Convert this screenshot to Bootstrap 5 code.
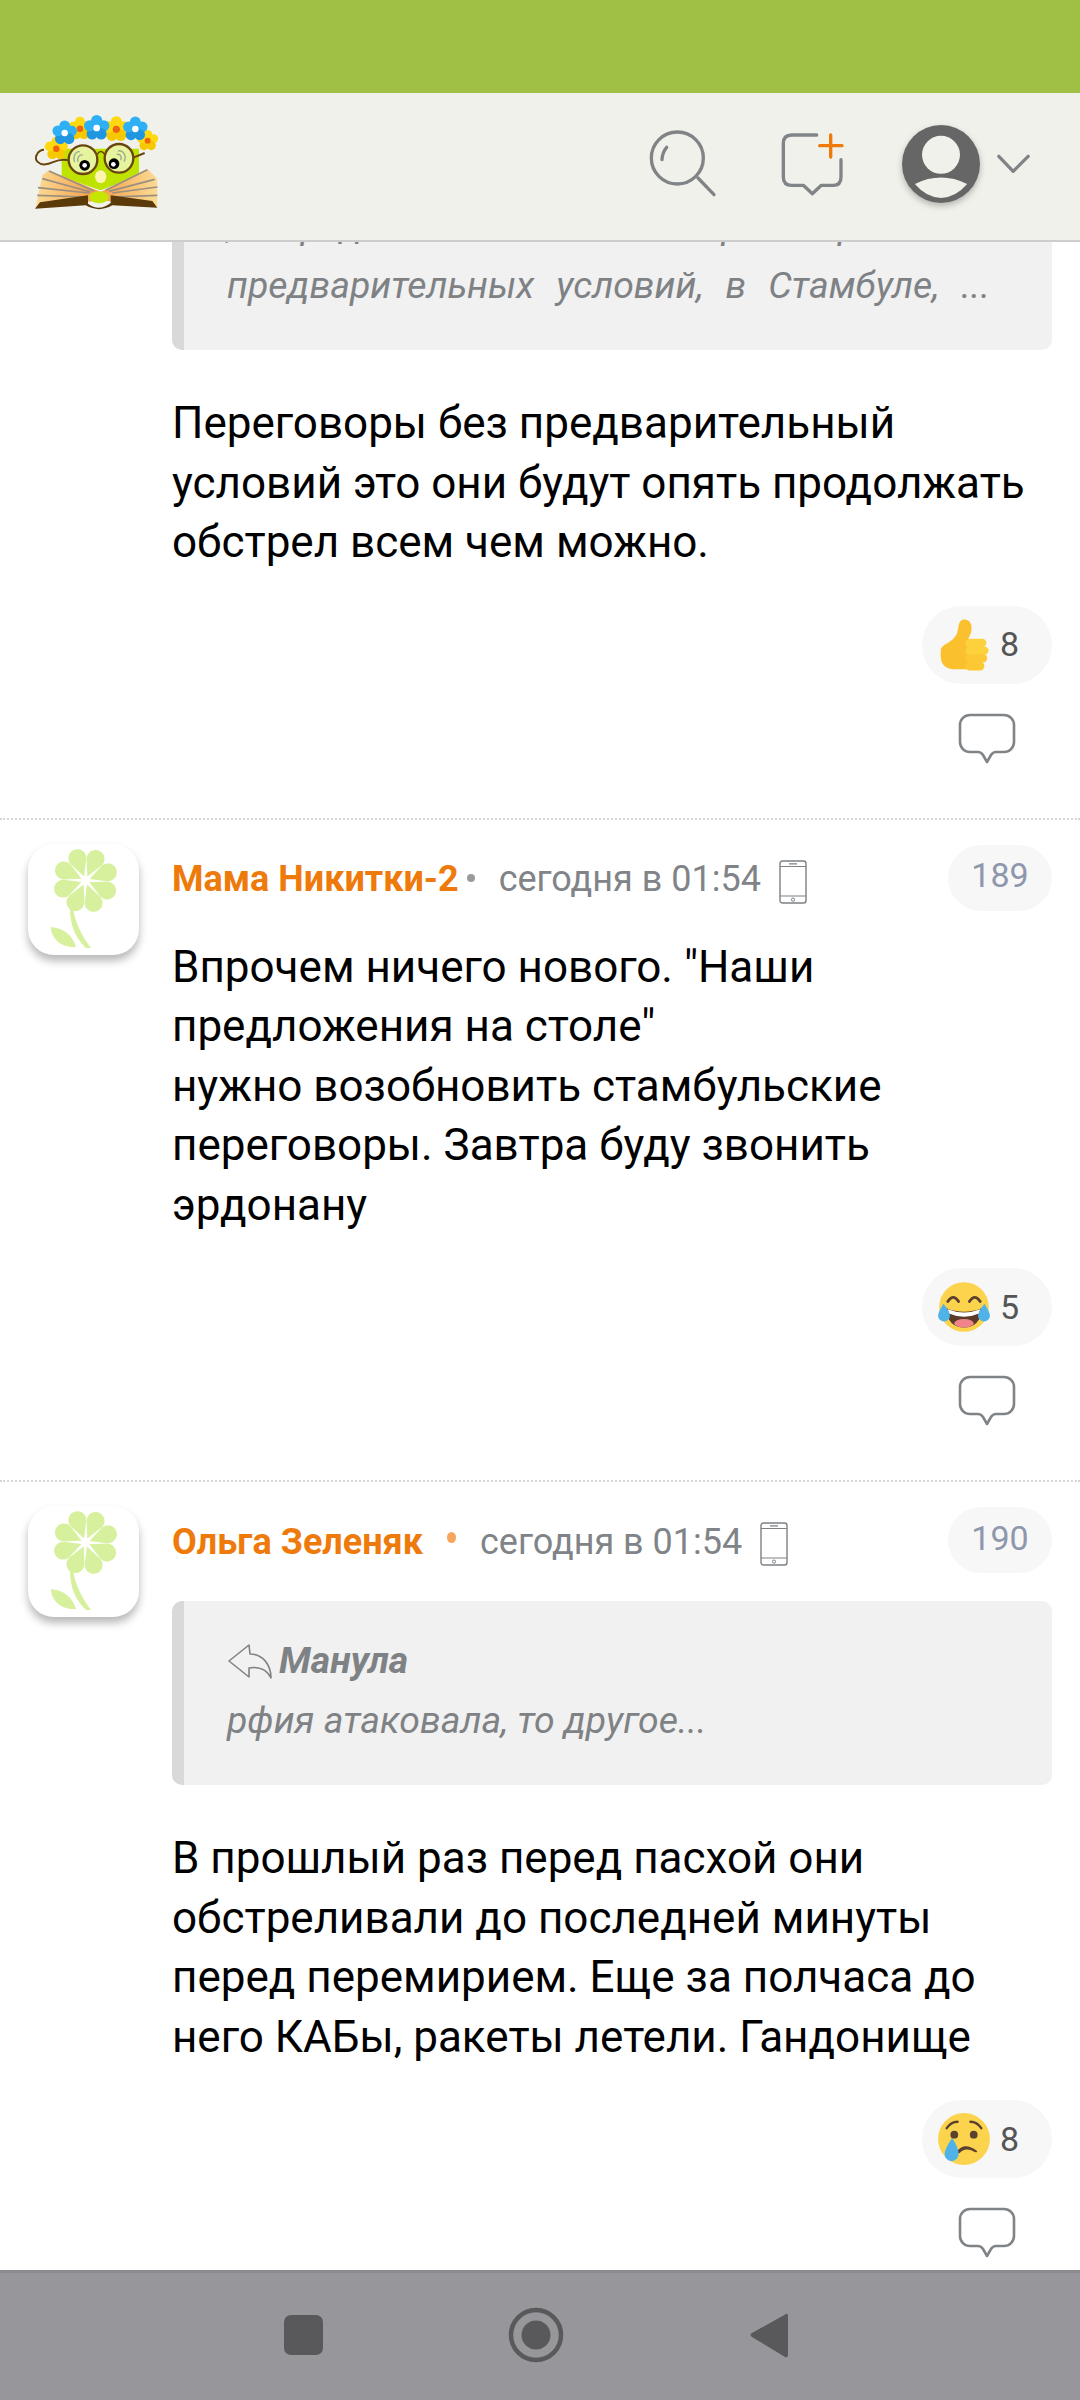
<!DOCTYPE html>
<html lang="ru">
<head>
<meta charset="utf-8">
<title>Комментарии</title>
<link rel="stylesheet" href="https://cdn.jsdelivr.net/npm/bootstrap@5.3.0/dist/css/bootstrap.min.css">
<style>
html,body{height:100%}
body{font-family:Roboto,"Liberation Sans",sans-serif;color:#000;background:#fff;height:2400px;overflow:hidden}
.status-strip{height:93px;background:#9fc045;flex:none}
.top-bar{height:149px;flex:none;background:#f0f1ea;border-bottom:2px solid #cdcdcd;padding:0 50px 6px 35px;position:relative;z-index:2}
.brand-logo{margin-bottom:6px}
.ico-search{width:70px;height:70px;margin-right:62px}
.ico-new{width:65px;height:65px;margin-right:57px}
.ico-user{width:78px;height:78px;margin-right:17px;filter:drop-shadow(0 3px 3px rgba(0,0,0,.25))}
.ico-chev{width:33px;height:20px}
.feed{min-height:0;flex:1 1 auto}
.lead-in{margin-top:-76px;padding:0 28px 0 172px}
.quote-box{background:#f1f1f1;border-left:12px solid #d9d9d9;border-radius:10px;padding:29px 62px 35px 43px;font-style:italic;font-size:37.4px;line-height:60px;color:#7f8285}
.quote-just{text-align:justify;text-align-last:justify}
.quote-who{font-weight:700}
.ico-reply{width:45px;height:36px;margin-right:7px;vertical-align:-6px}
.msg-text{font-size:44px;line-height:59.5px;margin:0;color:#000}
.comment-entry{padding:24px 28px 52px 28px;border-top:2px dotted #d6d6d6;gap:33px}
.ava{width:111px;height:111px;border-radius:26px;background:#fff;box-shadow:0 6px 8px rgba(0,0,0,.28);flex:none}
.entry-body{min-width:0;padding-top:1px}
.meta-row{height:66px;font-size:36px;color:#808488}
.who{color:#ee7a0c;font-weight:700;padding-top:3px}
.when{padding-top:3px}
.sep-dot{width:8px;height:8px;border-radius:50%;background:#9a9a9a}
.sep-dot.warm{background:#f5a55c;height:11px;width:9px;margin-bottom:6px}
.num-pill{width:104px;height:66px;background:#f7f7f8;color:#8e97ab;font-size:34px;border-radius:33px;padding-bottom:4px}
.ico-phone{width:28px;height:44px;margin:8px 0 0 18px}
.react-pill{width:130px;height:78px;border-radius:39px;background:#f7f7f8;font-size:34px;color:#555;padding-left:15px;gap:9px;margin-top:33px}
.emo{width:54px;height:54px;flex:none}
.ico-talk{width:58px;height:53px;margin-top:29px;margin-right:36px}
.lead-text{margin:44px 28px 0 172px}
.lead-acts{margin-right:28px}
.lead-acts + .gapline{margin-top:52px}
.nav-strip{height:130px;flex:none;background:#97969b;border-top:3px solid #8c8b90;position:relative;z-index:2}
.nav-strip svg{display:block}
.q-top{margin-top:28px}
.t-gap{margin-top:27px}
.t-gap-q{margin-top:44px}
</style>
</head>
<body class="d-flex flex-column">
<svg width="0" height="0" class="position-absolute">
  <defs>
    <g id="fy"><circle cx="0" cy="-19" r="14" fill="#ffd90f"/><circle cx="18" cy="-6" r="14" fill="#ffd90f"/><circle cx="11" cy="15" r="14" fill="#f5c800"/><circle cx="-11" cy="15" r="14" fill="#f5c800"/><circle cx="-18" cy="-6" r="14" fill="#ffd90f"/><circle r="9" fill="#f0640f"/></g>
    <g id="fb"><circle cx="0" cy="-20" r="15" fill="#2fb0f5"/><circle cx="19" cy="-6" r="15" fill="#2fb0f5"/><circle cx="12" cy="16" r="15" fill="#2196e0"/><circle cx="-12" cy="16" r="15" fill="#2196e0"/><circle cx="-19" cy="-6" r="15" fill="#2fb0f5"/><circle r="9" fill="#fff"/></g>
    <symbol id="flower" viewBox="0 0 111 111">
      <g fill="#d7f09d">
        <path d="M45 64 C47 78 54 92 63 104 H58 C47 94 42 80 42 65Z"/>
        <path d="M23 83 C36 84 45 92 48 103 C35 104 23 96 23 83Z"/>
        <g transform="translate(57.5 36.5) scale(1.08)">
          <path id="pt" d="M0 -4 L-7.5 -18.5 A8.3 8.3 0 1 1 7.5 -18.5Z" transform="rotate(-20)"/>
          <use href="#pt" transform="rotate(45)"/><use href="#pt" transform="rotate(90)"/><use href="#pt" transform="rotate(135)"/><use href="#pt" transform="rotate(180)"/><use href="#pt" transform="rotate(225)"/><use href="#pt" transform="rotate(270)"/><use href="#pt" transform="rotate(315)"/>
        </g>
      </g>
    </symbol>
    <symbol id="talk" viewBox="0 0 58 53">
      <path d="M12 2 H46 A10 10 0 0 1 56 12 V29 A10 10 0 0 1 46 39 H38 Q35 39 33 42 L29 49 L25 42 Q23 39 20 39 H12 A10 10 0 0 1 2 29 V12 A10 10 0 0 1 12 2Z" fill="none" stroke="#808487" stroke-width="2.6" stroke-linejoin="round"/>
    </symbol>
    <symbol id="phone" viewBox="0 0 28 44">
      <rect x="1" y="1" width="26" height="42" rx="2.5" fill="none" stroke="#7d8185" stroke-width="1.4"/>
      <path d="M1 6.5 H27 M1 36 H27 M10 3.8 H18" stroke="#7d8185" stroke-width="1.2" fill="none"/>
      <circle cx="14" cy="39.6" r="1.6" fill="none" stroke="#7d8185" stroke-width="1"/>
    </symbol>
  </defs>
</svg>

<div class="status-strip"></div>

<header class="top-bar d-flex align-items-center">
  <svg class="brand-logo" width="124" height="98" viewBox="103 95 372 294" aria-label="logo">
    <defs>
      <linearGradient id="pg" x1="0" y1="0" x2="1" y2="0"><stop offset="0" stop-color="#fbdc95"/><stop offset=".5" stop-color="#f59b45"/><stop offset="1" stop-color="#fbdc95"/></linearGradient>
    </defs>
    <path d="M183 205 H415 V285 L300 330 L183 290Z" fill="#bfe300"/>
    <path d="M105 382 L125 285 L145 270 L300 335 L440 266 L470 295 L470 378 L300 360Z" fill="url(#pg)"/>
    <path d="M112 322 L265 338 M110 345 L262 350 M125 295 L270 335 M145 272 L280 332 M470 320 L335 338 M470 345 L335 350 M462 297 L325 333 M440 268 L315 330" stroke="#9a8f80" stroke-width="5" fill="none"/>
    <path d="M103 385 L118 366 L262 345 L262 370 Q295 395 330 368 L330 345 L455 362 L470 382 L335 375 Q295 398 255 375Z" fill="#5a3a08"/>
    <ellipse cx="295" cy="351" rx="29" ry="18" fill="#c4e600"/>
    <ellipse cx="300" cy="289" rx="17" ry="19" fill="#fff5b0"/>
    <path d="M205 240 C170 232 155 250 135 252 C115 254 100 240 108 224 C112 213 124 208 130 208 M398 232 L432 218" stroke="#6b4510" stroke-width="6" fill="none"/>
    <circle cx="247" cy="238" r="43" fill="#e6f4a0" stroke="#6b4510" stroke-width="7"/>
    <circle cx="355" cy="234" r="43" fill="#e6f4a0" stroke="#6b4510" stroke-width="7"/>
    <path d="M290 222 Q300 205 312 222" stroke="#6b4510" stroke-width="5" fill="none"/>
    <path d="M222 245 C215 225 228 210 238 215 M232 245 C228 232 236 222 246 224 M370 244 C380 225 365 208 352 212 M360 240 C365 228 358 220 348 222" stroke="#9aa890" stroke-width="4" fill="none"/>
    <circle cx="252" cy="255" r="16" fill="#000"/><circle cx="252" cy="255" r="7" fill="#fff"/>
    <circle cx="340" cy="250" r="16" fill="#000"/><circle cx="338" cy="252" r="7" fill="#fff"/>
    <use href="#fy" transform="translate(167 205) scale(1.08)"/>
    <use href="#fy" transform="translate(238 145) scale(1.08)"/>
    <use href="#fy" transform="translate(347 147) scale(1.2)"/>
    <use href="#fy" transform="translate(441 181) scale(.98)"/>
    <use href="#fb" transform="translate(192 158) scale(1.08)"/>
    <use href="#fb" transform="translate(288 143) scale(1.12)"/>
    <use href="#fb" transform="translate(404 146) scale(1.08)"/>
  </svg>
  <svg class="ico-search ms-auto" viewBox="85 88 210 210" aria-label="search">
    <circle cx="173" cy="175" r="78" fill="none" stroke="#808487" stroke-width="10"/>
    <path d="M235 235 L283 285" stroke="#808487" stroke-width="10" stroke-linecap="round"/>
    <path d="M141 143 Q128 158 127 180" stroke="#808487" stroke-width="10" stroke-linecap="round" fill="none"/>
  </svg>
  <svg class="ico-new" viewBox="485 92 195 195" aria-label="new">
    <path d="M595 104 H520 Q495 104 495 129 V230 Q495 255 520 255 H555 L582 280 L609 255 H645 Q668 255 668 230 V178" fill="none" stroke="#808487" stroke-width="10" stroke-linecap="round" stroke-linejoin="round"/>
    <path d="M637 104 V170 M604 136 H671" stroke="#ee7a0c" stroke-width="10" stroke-linecap="round"/>
  </svg>
  <svg class="ico-user" viewBox="850 72 230 230" aria-label="user">
    <circle cx="965" cy="187" r="115" fill="#666"/>
    <circle cx="965" cy="160" r="56" fill="#f0f1ea"/>
    <path d="M888 246 Q965 208 1042 246 Q1008 286 965 287 Q922 286 888 246Z" fill="#f0f1ea"/>
  </svg>
  <svg class="ico-chev" viewBox="1132 158 98 60" aria-hidden="true">
    <path d="M1137 165 L1180 210 L1225 165" fill="none" stroke="#808487" stroke-width="10" stroke-linecap="round" stroke-linejoin="round"/>
  </svg>
</header>

<main class="feed overflow-hidden">
  <div class="lead-in">
    <div class="quote-box">
      <div class="quote-just">, предложил начать переговоры без</div>
      <div class="quote-just">предварительных условий, в Стамбуле, ...</div>
    </div>
  </div>
  <p class="msg-text lead-text">Переговоры без предварительный<br>условий это они будут опять продолжать<br>обстрел всем чем можно.</p>
  <div class="d-flex flex-column align-items-end lead-acts">
    <div class="react-pill d-flex align-items-center">
      <svg class="emo" viewBox="172 86 152 154" aria-label="thumbs up">
        <path d="M182 178 C182 160 215 158 228 130 C234 112 230 90 250 90 C270 92 272 112 268 128 L258 150 L262 232 L215 232 C190 228 178 215 182 178Z" fill="#fbc02d"/>
        <rect x="252" y="145" width="60" height="24" rx="12" fill="#fdd13c"/>
        <rect x="252" y="167" width="66" height="24" rx="12" fill="#fdd13c"/>
        <rect x="252" y="189" width="62" height="24" rx="12" fill="#fcc934"/>
        <rect x="252" y="211" width="54" height="25" rx="12" fill="#fcc934"/>
      </svg>
      <span>8</span>
    </div>
    <svg class="ico-talk"><use href="#talk"/></svg>
  </div>

  <article class="comment-entry gapline d-flex">
    <svg class="ava"><use href="#flower"/></svg>
    <div class="entry-body flex-grow-1">
      <div class="meta-row d-flex align-items-center">
        <span class="who">Мама Никитки-2</span>
        <span class="sep-dot ms-2 me-4"></span>
        <span class="when">сегодня в 01:54</span>
        <svg class="ico-phone"><use href="#phone"/></svg>
        <span class="num-pill ms-auto d-flex align-items-center justify-content-center">189</span>
      </div>
      <p class="msg-text t-gap">Впрочем ничего нового. "Наши<br>предложения на столе"<br>нужно возобновить стамбульские<br>переговоры. Завтра буду звонить<br>эрдонану</p>
      <div class="d-flex flex-column align-items-end">
        <div class="react-pill d-flex align-items-center">
          <svg class="emo" viewBox="0 0 50 50" aria-label="joy">
            <circle cx="25" cy="25" r="23" fill="#fcd34d"/>
            <path d="M10 20 Q15 12 20 20 M30 20 Q35 12 40 20" fill="none" stroke="#5b4030" stroke-width="2.6" stroke-linecap="round"/>
            <path d="M8 26 Q25 33 42 26 Q40 44 25 44 Q10 44 8 26Z" fill="#5b3a28"/>
            <path d="M10 27 Q25 33 40 27 L39 31 Q25 37 11 31Z" fill="#fff"/>
            <ellipse cx="25" cy="40" rx="9" ry="4" fill="#f0848a"/>
            <path d="M6 22 Q1 30 1 33 A5.5 5.5 0 0 0 12 33 Q11 28 6 22Z M44 22 Q49 30 49 33 A5.5 5.5 0 0 1 38 33 Q39 28 44 22Z" fill="#4fb3ea"/>
          </svg>
          <span>5</span>
        </div>
        <svg class="ico-talk"><use href="#talk"/></svg>
      </div>
    </div>
  </article>

  <article class="comment-entry d-flex">
    <svg class="ava"><use href="#flower"/></svg>
    <div class="entry-body flex-grow-1">
      <div class="meta-row d-flex align-items-center">
        <span class="who">Ольга Зеленяк</span>
        <span class="sep-dot warm mx-4"></span>
        <span class="when">сегодня в 01:54</span>
        <svg class="ico-phone"><use href="#phone"/></svg>
        <span class="num-pill ms-auto d-flex align-items-center justify-content-center">190</span>
      </div>
      <div class="quote-box q-top">
        <div class="quote-who"><svg class="ico-reply" viewBox="0 0 45 36"><path d="M22 2 L2 18 L22 34 L22 25 C32 23 40 27 44 35 C44 22 36 11 23 11Z" fill="none" stroke="#7f8285" stroke-width="1.6" stroke-linejoin="round"/></svg>Манула</div>
        <div>рфия атаковала, то другое...</div>
      </div>
      <p class="msg-text t-gap-q">В прошлый раз перед пасхой они<br>обстреливали до последней минуты<br>перед перемирием. Еще за полчаса до<br>него КАБы, ракеты летели. Гандонище</p>
      <div class="d-flex flex-column align-items-end">
        <div class="react-pill d-flex align-items-center">
          <svg class="emo" viewBox="0 0 50 50" aria-label="cry">
            <circle cx="25" cy="25" r="24" fill="#fcd34d"/>
            <path d="M9 15 Q13 9 19 9 M31 9 Q37 9 41 15" fill="none" stroke="#5b4030" stroke-width="2.2" stroke-linecap="round"/>
            <circle cx="16" cy="21" r="3.6" fill="#5b4030"/><circle cx="34" cy="21" r="3.6" fill="#5b4030"/>
            <path d="M18 37 Q25 27 37 36 Q38 38 35 37 Q26 32 21 38 Q18 39 18 37Z" fill="#5b4030"/>
            <path d="M14 24 Q7 34 7 39 A6.5 6.5 0 0 0 20 39 Q20 33 14 24Z" fill="#4fb3ea"/>
          </svg>
          <span>8</span>
        </div>
        <svg class="ico-talk"><use href="#talk"/></svg>
      </div>
    </div>
  </article>
</main>

<nav class="nav-strip d-flex align-items-center">
  <svg width="1080" height="127" viewBox="0 2273 1080 127" aria-label="navigation">
    <rect x="284" y="2315" width="39" height="40" rx="7" fill="#59595b"/>
    <circle cx="536" cy="2335" r="25" fill="none" stroke="#59595b" stroke-width="4.5"/>
    <circle cx="536" cy="2335" r="14.5" fill="#59595b"/>
    <path d="M786 2314 Q788 2313 788 2316 V2355 Q788 2358 785 2357 L752 2337 Q749 2335 752 2333Z" fill="#59595b"/>
  </svg>
</nav>
</body>
</html>
